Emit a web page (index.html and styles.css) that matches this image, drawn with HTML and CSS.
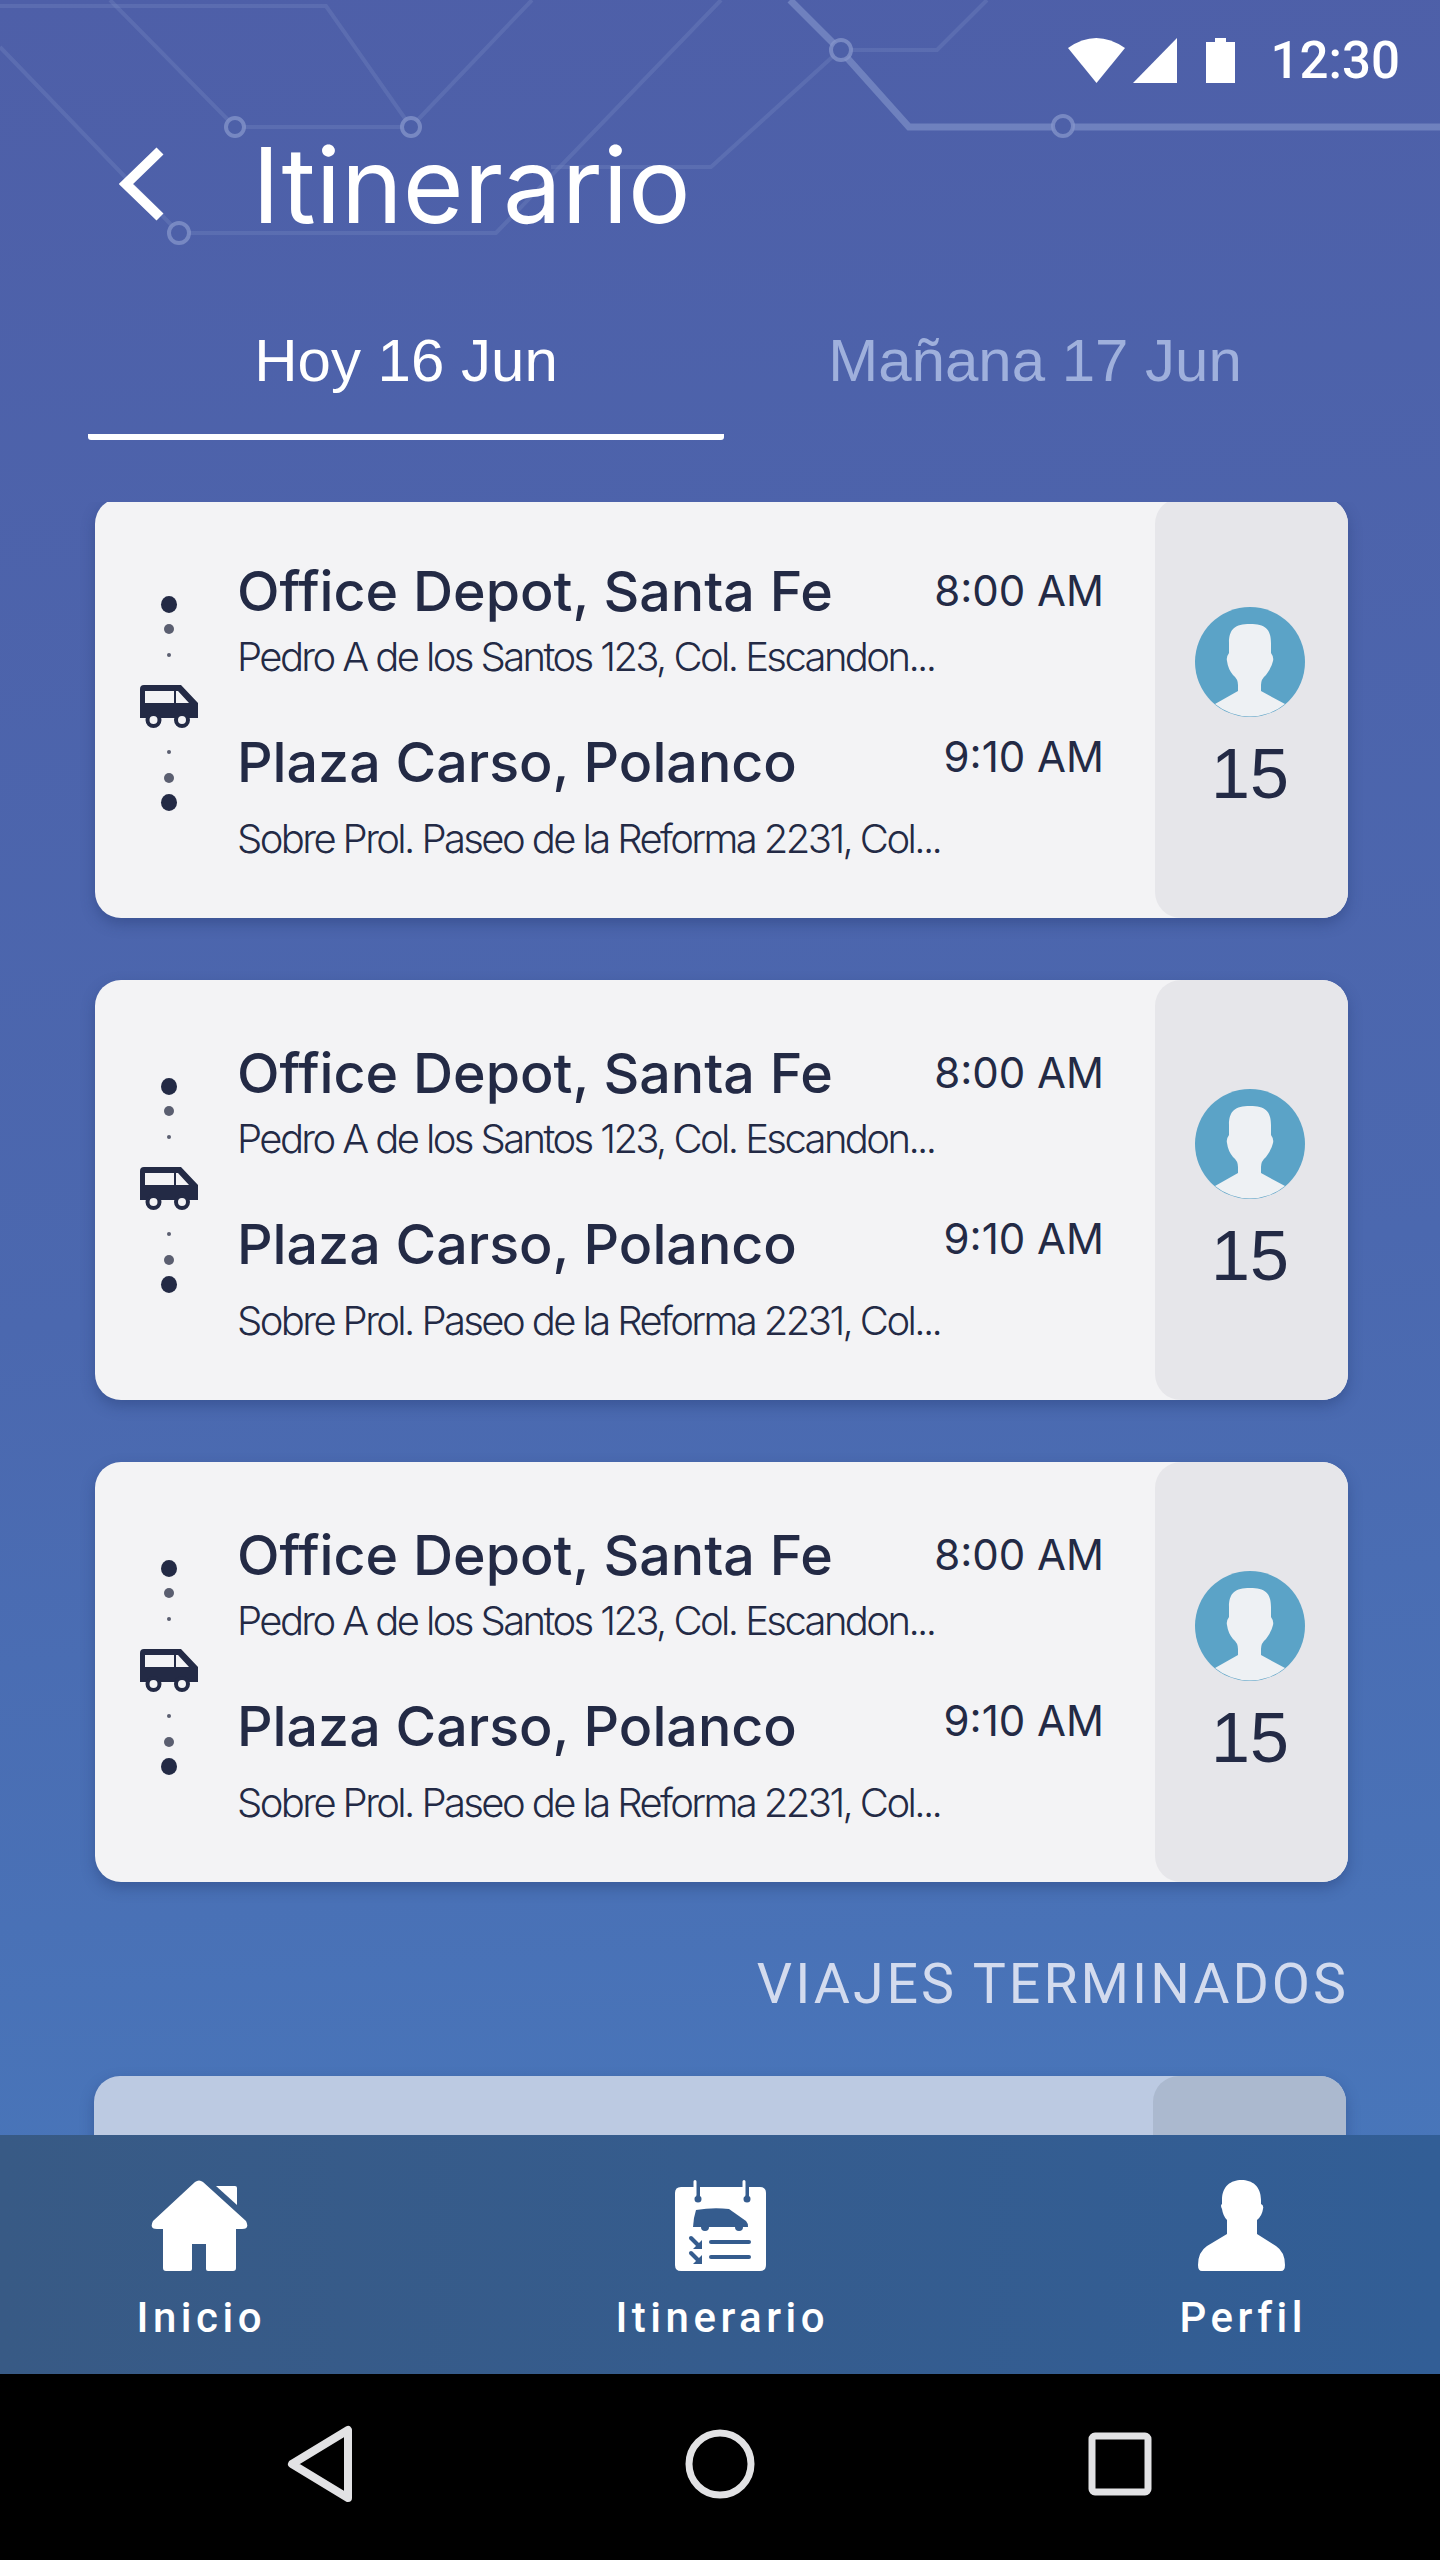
FILE: index.html
```html
<!DOCTYPE html>
<html lang="es">
<head>
  <meta charset="UTF-8">
  <title>Itinerario</title>
  <link rel="stylesheet" href="styles.css">
</head>
<body>
<div class="screen">
  <svg class="circuit" width="1440" height="260" viewBox="0 0 1440 260" fill="none">
    <g stroke="#7f90c6" stroke-opacity=".28" stroke-width="4">
      <path d="M0 6H326L411 127"/>
      <path d="M110 0L235 127H411"/>
      <path d="M532 0L411 127"/>
      <path d="M0 47L179 233H496L721 0"/>
      <path d="M551 167H711L840 50"/>
      <path d="M840 50H937L987 0"/>
    </g>
    <path d="M790 0L840 50L909 127H1440" stroke="#8fa2d4" stroke-opacity=".5" stroke-width="7"/>
    <g fill="#4d60a8" stroke="#8696cb" stroke-opacity=".75" stroke-width="4">
      <circle cx="235" cy="127" r="9"/>
      <circle cx="411" cy="127" r="9"/>
      <circle cx="179" cy="233" r="10"/>
      <circle cx="841" cy="50" r="10"/>
      <circle cx="1063" cy="126" r="10"/>
    </g>
  </svg>

  <div class="status-bar">
    <svg width="57" height="45" viewBox="0 0 57 45"><path d="M0 10Q28-10 57 10L28.500 45Z" fill="#fff"/></svg>
    <svg class="signal" width="44" height="45" viewBox="0 0 44 45"><path d="M44 0V45H0Z" fill="#fff"/></svg>
    <svg class="battery" width="29" height="45" viewBox="0 0 29 45"><path d="M0 4H9V0H20V4H29V45H0Z" fill="#fff"/></svg>
    <span class="clock">12:30</span>
  </div>

  <header class="top-bar">
    <svg width="46" height="74" viewBox="0 0 46 74" fill="none"><path d="M41 4L7 37L41 70" stroke="#fff" stroke-width="10"/></svg>
    <h1>Itinerario</h1>
  </header>

  <nav class="tabs">
    <div class="tab active">Hoy 16 Jun</div>
    <div class="tab">Mañana 17 Jun</div>
  </nav>

  <main class="trips">
    <div class="card">
      <div class="route">
        <i class="dot big"></i><i class="dot mid"></i><i class="dot tiny"></i>
        <svg class="van" width="58" height="44" viewBox="0 0 58 44"><path fill-rule="evenodd" fill="#232a45" d="M4 0H41L58 18V33H0V4Q0 0 4 0ZM5 6V18H34V6ZM36 6V18H49L38 6Z"/><circle cx="13.500" cy="35" r="6" fill="#f3f3f5" stroke="#232a45" stroke-width="4"/><circle cx="42" cy="35" r="6" fill="#f3f3f5" stroke="#232a45" stroke-width="4"/></svg>
        <i class="dot tiny"></i><i class="dot mid"></i><i class="dot big"></i>
      </div>
      <div class="stops">
        <div class="stop-head"><h3>Office Depot, Santa Fe</h3><span class="time">8:00 AM</span></div>
        <p>Pedro A de los Santos 123, Col. Escandon...</p>
        <div class="stop-head second"><h3>Plaza Carso, Polanco</h3><span class="time">9:10 AM</span></div>
        <p class="last">Sobre Prol. Paseo de la Reforma 2231, Col...</p>
      </div>
      <div class="seats">
        <svg class="avatar" width="110" height="110" viewBox="0 0 110 110"><circle cx="55" cy="55" r="55" fill="#5ba3c7"/><path fill="#eef1f4" d="M34 36C34 22 40 17 55 17S76 22 76 36V46Q79 50 78 54Q76 62 71 68Q66 72 66 78V84L90 97A55 55 0 0 1 20 97L43 84V78Q43 72 38 68Q33 62 32 54Q31 50 34 46Z"/></svg>
        <span class="count">15</span>
      </div>
    </div>

    <div class="card">
      <div class="route">
        <i class="dot big"></i><i class="dot mid"></i><i class="dot tiny"></i>
        <svg class="van" width="58" height="44" viewBox="0 0 58 44"><path fill-rule="evenodd" fill="#232a45" d="M4 0H41L58 18V33H0V4Q0 0 4 0ZM5 6V18H34V6ZM36 6V18H49L38 6Z"/><circle cx="13.500" cy="35" r="6" fill="#f3f3f5" stroke="#232a45" stroke-width="4"/><circle cx="42" cy="35" r="6" fill="#f3f3f5" stroke="#232a45" stroke-width="4"/></svg>
        <i class="dot tiny"></i><i class="dot mid"></i><i class="dot big"></i>
      </div>
      <div class="stops">
        <div class="stop-head"><h3>Office Depot, Santa Fe</h3><span class="time">8:00 AM</span></div>
        <p>Pedro A de los Santos 123, Col. Escandon...</p>
        <div class="stop-head second"><h3>Plaza Carso, Polanco</h3><span class="time">9:10 AM</span></div>
        <p class="last">Sobre Prol. Paseo de la Reforma 2231, Col...</p>
      </div>
      <div class="seats">
        <svg class="avatar" width="110" height="110" viewBox="0 0 110 110"><circle cx="55" cy="55" r="55" fill="#5ba3c7"/><path fill="#eef1f4" d="M34 36C34 22 40 17 55 17S76 22 76 36V46Q79 50 78 54Q76 62 71 68Q66 72 66 78V84L90 97A55 55 0 0 1 20 97L43 84V78Q43 72 38 68Q33 62 32 54Q31 50 34 46Z"/></svg>
        <span class="count">15</span>
      </div>
    </div>

    <div class="card">
      <div class="route">
        <i class="dot big"></i><i class="dot mid"></i><i class="dot tiny"></i>
        <svg class="van" width="58" height="44" viewBox="0 0 58 44"><path fill-rule="evenodd" fill="#232a45" d="M4 0H41L58 18V33H0V4Q0 0 4 0ZM5 6V18H34V6ZM36 6V18H49L38 6Z"/><circle cx="13.500" cy="35" r="6" fill="#f3f3f5" stroke="#232a45" stroke-width="4"/><circle cx="42" cy="35" r="6" fill="#f3f3f5" stroke="#232a45" stroke-width="4"/></svg>
        <i class="dot tiny"></i><i class="dot mid"></i><i class="dot big"></i>
      </div>
      <div class="stops">
        <div class="stop-head"><h3>Office Depot, Santa Fe</h3><span class="time">8:00 AM</span></div>
        <p>Pedro A de los Santos 123, Col. Escandon...</p>
        <div class="stop-head second"><h3>Plaza Carso, Polanco</h3><span class="time">9:10 AM</span></div>
        <p class="last">Sobre Prol. Paseo de la Reforma 2231, Col...</p>
      </div>
      <div class="seats">
        <svg class="avatar" width="110" height="110" viewBox="0 0 110 110"><circle cx="55" cy="55" r="55" fill="#5ba3c7"/><path fill="#eef1f4" d="M34 36C34 22 40 17 55 17S76 22 76 36V46Q79 50 78 54Q76 62 71 68Q66 72 66 78V84L90 97A55 55 0 0 1 20 97L43 84V78Q43 72 38 68Q33 62 32 54Q31 50 34 46Z"/></svg>
        <span class="count">15</span>
      </div>
    </div>

    <h2>VIAJES TERMINADOS</h2>

    <div class="card done">
      <div class="seats"></div>
    </div>
  </main>

  <footer class="bottom-nav">
    <div class="nav-item">
      <svg width="97" height="91" viewBox="0 0 97 91"><path fill="#fff" d="M44 2Q48-1 52 2L95 41Q99 49 91 49H85V88Q85 91 82 91H57Q55 91 55 89V64H41V89Q41 91 39 91H15Q12 91 12 88V49H6Q-2 49 2 41Z"/><path fill="#fff" d="M65 6H84Q86 6 86 8V25Z"/></svg>
      <span>Inicio</span>
    </div>
    <div class="nav-item">
      <svg width="91" height="91" viewBox="0 0 91 91">
        <path fill="#fff" d="M6 7H85Q91 7 91 13V85Q91 91 85 91H6Q0 91 0 85V13Q0 7 6 7Z"/>
        <g fill="#355c8e">
          <rect x="21" y="5" width="4" height="14"/>
          <circle cx="23" cy="19" r="3.500"/>
          <rect x="70" y="5" width="4" height="14"/>
          <circle cx="72" cy="19" r="3.500"/>
          <path d="M21 30Q38 27 54 29L71 41Q73 43 73 47H18L19 38Z"/>
          <circle cx="30" cy="47" r="4"/>
          <circle cx="64" cy="47" r="4"/>
          <path d="M27 60V69H18Z"/>
          <path d="M27 75V84H18Z"/>
        </g>
        <g stroke="#355c8e" stroke-width="4" stroke-linecap="round">
          <path d="M16 58L24 66"/>
          <path d="M16 73L24 81"/>
          <path d="M36 62H74"/>
          <path d="M36 77H74"/>
        </g>
        <path d="M20 1.500V15M69 1.500V15" stroke="#fff" stroke-width="3" stroke-linecap="round"/>
      </svg>
      <span>Itinerario</span>
    </div>
    <div class="nav-item">
      <svg width="87" height="91" viewBox="0 0 87 91"><path fill="#fff" d="M24 20C24 6 33 0 43.500 0S63 6 63 20V24Q66 25 65 29Q64 36 59 40V54L78 66Q87 72 87 85Q87 91 83 91H4Q0 91 0 85Q0 72 9 66L29 54V40Q25 36 24 29Q22 25 24 24Z"/></svg>
      <span>Perfil</span>
    </div>
  </footer>

  <div class="system-bar">
    <svg width="80" height="80" viewBox="0 0 80 80" fill="none"><path d="M12 40L68 6V74Z" stroke="#e2e2e4" stroke-width="8" stroke-linejoin="round"/></svg>
    <svg width="80" height="80" viewBox="0 0 80 80" fill="none"><circle cx="40" cy="40" r="31" stroke="#e2e2e4" stroke-width="7"/></svg>
    <svg width="80" height="80" viewBox="0 0 80 80" fill="none"><rect x="12" y="12" width="56" height="56" rx="3" stroke="#e2e2e4" stroke-width="7"/></svg>
  </div>
</div>
</body>
</html>
```
FILE: styles.css
```css
* {
  box-sizing: border-box;
}
body {
  margin: 0;
  background: #000;
  font-family: Inter, sans-serif;
}
.screen {
  position: relative;
  width: 1440px;
  height: 2560px;
  display: flex;
  flex-direction: column;
  overflow: hidden;
  background: linear-gradient(176deg, #4e5fa8 0%, #4b68af 50%, #4876ba 85%);
}
.circuit {
  position: absolute;
  top: 0;
  left: 0;
}
.status-bar {
  position: relative;
  height: 120px;
  padding: 38px 40px 0 0;
  display: flex;
  justify-content: flex-end;
  align-items: flex-start;
}
.signal {
  margin-left: 8px;
}
.battery {
  margin-left: 29px;
}
.clock {
  margin-left: 36px;
  font-family: Roboto, sans-serif;
  font-weight: 500;
  font-size: 51px;
  line-height: 45px;
  color: #fff;
}
.top-bar {
  position: relative;
  height: 122px;
  padding: 27px 0 0 119px;
  display: flex;
  align-items: flex-start;
}
.top-bar h1 {
  margin: -17px 0 0 87px;
  font-weight: 400;
  font-size: 104.500px;
  line-height: 110px;
  color: #fff;
}
.tabs {
  height: 260px;
  padding: 0 0 0 88px;
  display: flex;
}
.tab {
  width: 622px;
  height: 198px;
  text-align: center;
  padding-top: 84px;
  font-family: "Liberation Sans", sans-serif;
  font-size: 60px;
  line-height: 70px;
  color: #9fb0dc;
}
.tab.active {
  width: 636px;
  color: #fff;
  border-bottom: 6px solid #fff;
  border-radius: 0 0 3px 3px;
}
.trips {
  flex: 1;
  min-height: 0;
  overflow: hidden;
  padding: 0 92px 0 95px;
}
.card {
  height: 420px;
  margin-top: 62px;
  display: flex;
  background: #f3f3f5;
  border-radius: 26px;
  box-shadow: 0 6px 14px rgba(30, 50, 100, .35);
  overflow: hidden;
}
.card:first-child {
  margin-top: -4px;
}
.route {
  width: 145px;
  padding: 98px 0 0 2px;
  display: flex;
  flex-direction: column;
  align-items: center;
  flex-shrink: 0;
}
.dot {
  display: block;
  border-radius: 50%;
  background: #232a45;
}
.dot.big {
  width: 16px;
  height: 17px;
}
.dot.mid {
  width: 10px;
  height: 10px;
  margin: 11px 0;
  background: #5a5e70;
}
.dot.tiny {
  width: 4px;
  height: 4px;
  margin: 8px 0;
  background: #5a5e70;
}
.van {
  margin: 20px 0 13px;
}
.stops {
  flex: 1;
  min-width: 0;
  padding: 62px 51px 0 0;
}
.stop-head {
  display: flex;
  justify-content: space-between;
  align-items: flex-start;
}
.stop-head.second {
  margin-top: 50px;
}
.stops h3 {
  margin: 0 0 0 -3px;
  font-weight: 500;
  font-size: 55.5px;
  line-height: 62px;
  color: #232a45;
}
.time {
  margin-top: 5px;
  font-size: 42px;
  line-height: 52px;
  color: #232a45;
}
.second .time {
  margin-top: 0;
}
.stops p {
  margin: 11px 0 0 -3px;
  font-weight: 300;
  font-size: 40px;
  line-height: 48px;
  letter-spacing: -2.6px;
  white-space: nowrap;
  color: #232a45;
}
.stops p.last {
  margin-top: 22px;
}
.seats {
  width: 193px;
  flex-shrink: 0;
  padding: 109px 3px 0 0;
  display: flex;
  flex-direction: column;
  align-items: center;
  background: #e6e6ea;
  border-radius: 26px 0 0 26px;
}
.avatar {
  display: block;
}
.count {
  margin-top: 15px;
  font-family: "Liberation Sans", sans-serif;
  font-size: 70px;
  line-height: 84px;
  color: #232a45;
}
.trips h2 {
  margin: 69px -1px 0 0;
  text-align: right;
  font-family: Roboto, sans-serif;
  font-weight: 400;
  font-size: 55.5px;
  line-height: 68px;
  letter-spacing: 3px;
  color: #d3dbee;
}
.card.done {
  margin: 57px 2px 0 -1px;
  justify-content: flex-end;
  background: #bccae2;
}
.card.done .seats {
  background: #abb9cf;
}
.bottom-nav {
  height: 239px;
  flex-shrink: 0;
  padding: 45px 57px 0;
  display: flex;
  justify-content: space-between;
  background: linear-gradient(90deg, #385a85, #325e96);
}
.nav-item {
  width: 284px;
  display: flex;
  flex-direction: column;
  align-items: center;
}
.nav-item span {
  margin: 22px -4.5px 0 0;
  font-family: Roboto, sans-serif;
  font-weight: 500;
  font-size: 42px;
  line-height: 50px;
  letter-spacing: 4.5px;
  color: #fff;
}
.system-bar {
  height: 186px;
  flex-shrink: 0;
  padding: 0 280px 6px;
  display: flex;
  justify-content: space-between;
  align-items: center;
  background: #000;
}
```
